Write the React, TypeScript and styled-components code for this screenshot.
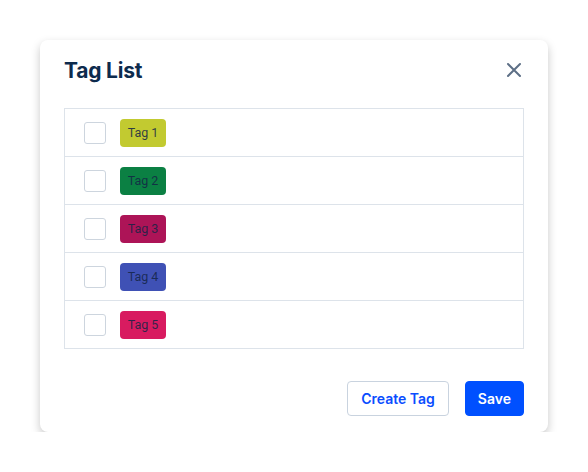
import React from "react";
import styled, { createGlobalStyle } from "styled-components";

const Global = createGlobalStyle`
  html, body { margin: 0; padding: 0; background: #ffffff; }
  body { font-family: "Inter", "Liberation Sans", sans-serif; }
`;

const Page = styled.div`
  padding: 40px 40px 0 40px;
`;

const Modal = styled.div`
  width: 508px;
  box-sizing: border-box;
  background: #fff;
  border-radius: 8px;
  box-shadow: 0 4px 10px rgba(0, 0, 0, 0.22);
  padding: 16px 24px 16px 24px;
  display: flex;
  flex-direction: column;
`;

const Header = styled.div`
  display: flex;
  align-items: center;
  justify-content: space-between;
  height: 28px;
  margin-bottom: 24px;
`;

const Title = styled.h2`
  margin: 0;
  font-family: "Inter", "Noto Sans", sans-serif;
  font-weight: 700;
  font-size: 21px;
  letter-spacing: -0.2px;
  color: #0d2b4d;
`;

const CloseButton = styled.button`
  border: none;
  background: transparent;
  padding: 0;
  width: 24px;
  height: 24px;
  margin-right: -2px;
  display: flex;
  align-items: center;
  justify-content: center;
  cursor: pointer;
`;

const Table = styled.div`
  border: 1px solid #dde3ea;
  display: flex;
  flex-direction: column;
`;

const Row = styled.div`
  height: 47px;
  display: flex;
  align-items: center;
  padding-left: 19px;
  gap: 14px;
  & + & {
    border-top: 1px solid #dde3ea;
  }
`;

const Checkbox = styled.span`
  width: 20px;
  height: 20px;
  border: 1px solid #cdd5de;
  border-radius: 3px;
  background: #fff;
  box-sizing: content-box;
`;

const Chip = styled.span<{ $bg: string }>`
  background: ${(p) => p.$bg};
  width: 46px;
  height: 28px;
  border-radius: 4px;
  display: flex;
  align-items: center;
  justify-content: center;
  font-family: "Roboto", "Liberation Sans", sans-serif;
  font-size: 12.5px;
  color: rgba(20, 36, 70, 0.85);
`;

const Footer = styled.div`
  display: flex;
  justify-content: flex-end;
  gap: 16px;
  margin-top: 32px;
`;

const Button = styled.button<{ $primary?: boolean }>`
  height: 35px;
  box-sizing: border-box;
  border-radius: 4px;
  font-family: "Inter", "Noto Sans", sans-serif;
  font-weight: 600;
  font-size: 14px;
  padding: 0 ${(p) => (p.$primary ? "12px" : "13px")};
  border: 1px solid ${(p) => (p.$primary ? "#0050ff" : "#c9d3df")};
  background: ${(p) => (p.$primary ? "#0050ff" : "#fff")};
  color: ${(p) => (p.$primary ? "#fff" : "#0a4dff")};
  cursor: pointer;
`;

const tags = [
  { name: "Tag 1", color: "#c2ca30" },
  { name: "Tag 2", color: "#0b8043" },
  { name: "Tag 3", color: "#ad1457" },
  { name: "Tag 4", color: "#3f51b5" },
  { name: "Tag 5", color: "#d81b60" },
];

export default function App() {
  return (
    <>
      <Global />
      <Page>
        <Modal>
          <Header>
            <Title>Tag List</Title>
            <CloseButton aria-label="Close">
              <svg width="16" height="16" viewBox="0 0 16 16">
                <path d="M2 2 L14 14 M14 2 L2 14" stroke="#5d6f86" strokeWidth="2" strokeLinecap="round" />
              </svg>
            </CloseButton>
          </Header>
          <Table>
            {tags.map((t) => (
              <Row key={t.name}>
                <Checkbox />
                <Chip $bg={t.color}>{t.name}</Chip>
              </Row>
            ))}
          </Table>
          <Footer>
            <Button>Create Tag</Button>
            <Button $primary>Save</Button>
          </Footer>
        </Modal>
      </Page>
    </>
  );
}
